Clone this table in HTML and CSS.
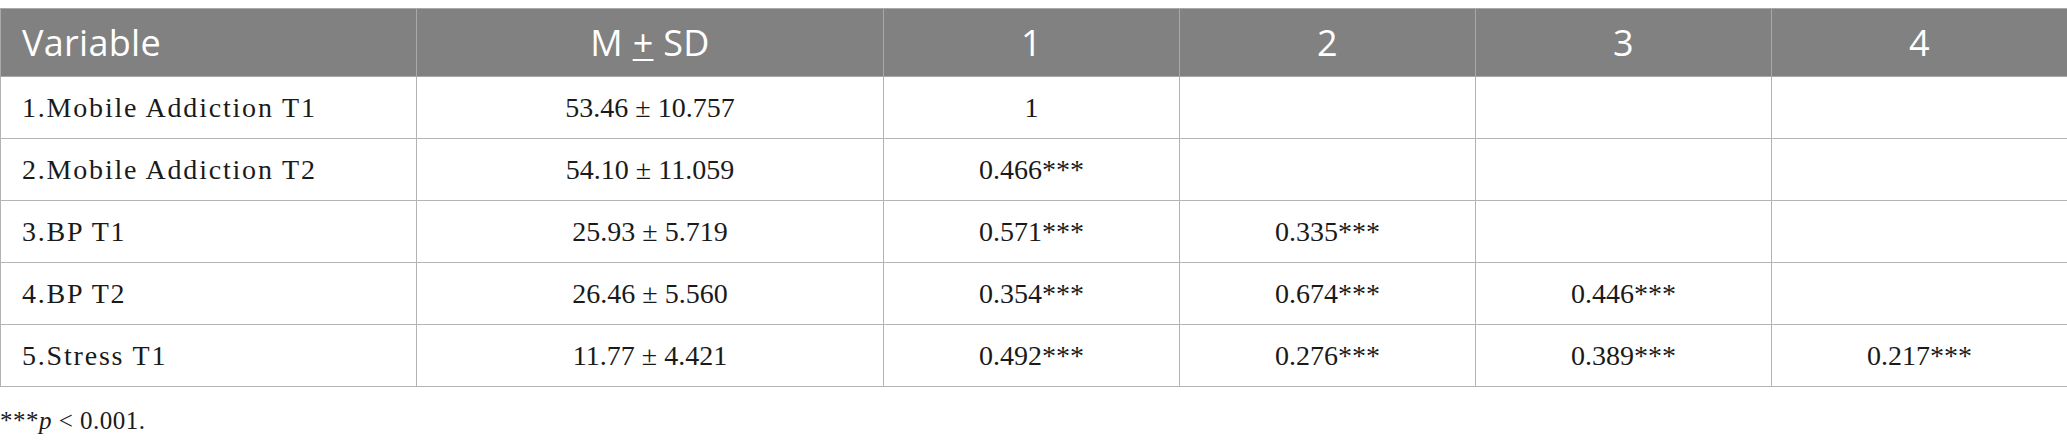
FILE: index.html
```html
<!DOCTYPE html>
<html>
<head>
<meta charset="utf-8">
<link rel="stylesheet" href="styles.css">
</head>
<body>
<div class="page">
<table class="corr">
  <colgroup>
    <col class="c-var">
    <col class="c-msd">
    <col class="c-n">
    <col class="c-n">
    <col class="c-n">
    <col class="c-n">
  </colgroup>
  <thead>
    <tr>
      <th class="left">Variable</th>
      <th>M <span class="pm">+</span> SD</th>
      <th>1</th>
      <th>2</th>
      <th>3</th>
      <th>4</th>
    </tr>
  </thead>
  <tbody>
    <tr>
      <td class="left">1.Mobile Addiction T1</td>
      <td>53.46 ± 10.757</td>
      <td>1</td>
      <td></td>
      <td></td>
      <td></td>
    </tr>
    <tr>
      <td class="left">2.Mobile Addiction T2</td>
      <td>54.10 ± 11.059</td>
      <td>0.466***</td>
      <td></td>
      <td></td>
      <td></td>
    </tr>
    <tr>
      <td class="left">3.BP T1</td>
      <td>25.93 ± 5.719</td>
      <td>0.571***</td>
      <td>0.335***</td>
      <td></td>
      <td></td>
    </tr>
    <tr>
      <td class="left">4.BP T2</td>
      <td>26.46 ± 5.560</td>
      <td>0.354***</td>
      <td>0.674***</td>
      <td>0.446***</td>
      <td></td>
    </tr>
    <tr>
      <td class="left">5.Stress T1</td>
      <td>11.77 ± 4.421</td>
      <td>0.492***</td>
      <td>0.276***</td>
      <td>0.389***</td>
      <td>0.217***</td>
    </tr>
  </tbody>
</table>
<p class="note">***<i>p</i> &lt; 0.001.</p>
</div>
</body>
</html>
```

FILE: styles.css
```css
html, body {
  margin: 0;
  padding: 0;
  background: #ffffff;
}

.page {
  padding-top: 8px;
  width: 2067px;
}

.corr {
  width: 2067px;
  border-collapse: collapse;
  table-layout: fixed;
}

.c-var { width: 416px; }
.c-msd { width: 467px; }
.c-n { width: 296px; }

.corr th {
  background: #808180;
  color: #ffffff;
  font-family: "Open Sans", "Noto Sans", sans-serif;
  font-weight: 400;
  font-size: 36px;
  letter-spacing: 0.3px;
  height: 67px;
  padding: 0 20px;
  text-align: center;
  border: 1px solid #a8a8a8;
  vertical-align: middle;
}

.corr th .pm {
  text-decoration: underline;
  text-underline-offset: 3px;
  text-decoration-thickness: 2px;
}

.corr td {
  font-family: "Liberation Serif", "Times New Roman", serif;
  font-size: 28px;
  color: #1a1a1a;
  height: 61px;
  padding: 0 20px;
  text-align: center;
  border: 1px solid #b4b4b4;
  vertical-align: middle;
}

.corr .left {
  text-align: left;
  padding-left: 21px;
}

.corr td.left {
  letter-spacing: 1.8px;
}

.note {
  margin: 20px 0 0 0;
  font-family: "Liberation Serif", "Times New Roman", serif;
  font-size: 25px;
  letter-spacing: 0.5px;
  color: #1a1a1a;
}
```
